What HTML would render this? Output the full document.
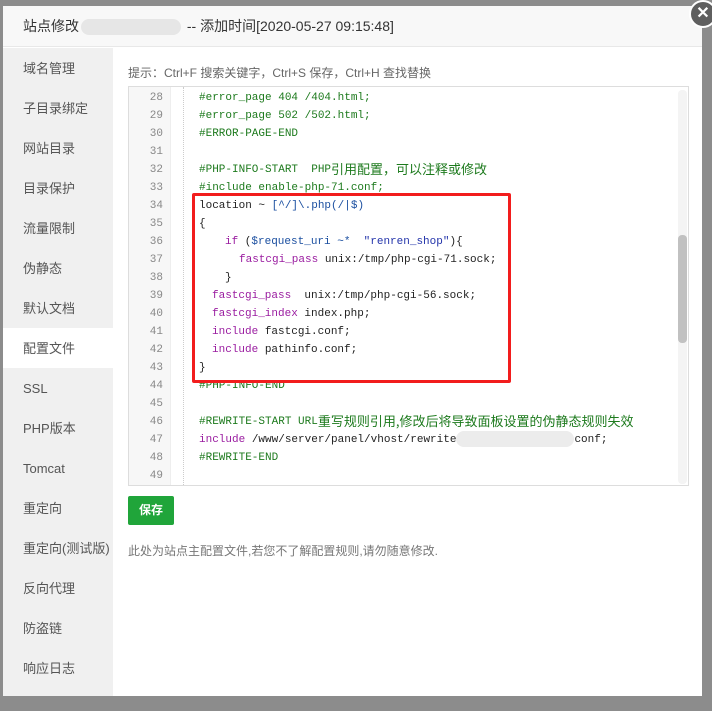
<!DOCTYPE html>
<html><head><meta charset="utf-8"><style>
*{margin:0;padding:0;box-sizing:border-box}
body{width:712px;height:711px;overflow:hidden;background:#8c8c8c;font-family:"Liberation Sans","Noto Sans CJK SC",sans-serif;position:relative}
.modal{position:absolute;left:3px;top:6px;width:699px;height:690px;background:#fff}
.hd{position:absolute;left:0;top:0;width:699px;height:41px;background:#f8f8f8;border-bottom:1px solid #e8e8e8;font-size:14px;color:#333;line-height:41px;padding-left:20px}
.blur{display:inline-block;width:100px;height:16px;background:#e6e6e6;border-radius:8px;vertical-align:middle;margin:0 2px}
.side{position:absolute;left:0;top:42px;width:110px;height:648px;background:#f0f0f0}
.side div{height:40px;line-height:42px;padding-left:20px;font-size:13px;color:#555}
.side .on{background:#fff}
.close{position:absolute;left:686px;top:-6px;width:28px;height:28px;border-radius:50%;background:#5f5f5f;border:2px solid #fff;color:#fff;font-size:16px;text-align:center;line-height:23px;font-weight:bold}
.tip{position:absolute;left:125px;top:58px;font-size:12px;color:#666}
.ed{position:absolute;left:125px;top:80px;width:561px;height:400px;border:1px solid #ddd;overflow:hidden;background:#fff}
.in{position:absolute;left:0;top:2px;width:561px;height:400px}
.gut{position:absolute;left:0;top:0;width:42px;height:400px;background:#f7f7f7;border-right:1px solid #eee}
.ln{position:absolute;left:0;width:34px;text-align:right;font:11px "Liberation Mono",monospace;color:#888;line-height:18px}
.cl{position:absolute;font:11px "Liberation Mono","Noto Sans CJK SC",monospace;line-height:18px;height:18px;white-space:pre;color:#222}
.cj{font-family:"Noto Sans CJK SC",sans-serif;font-size:13px;line-height:1;display:inline-block;vertical-align:top;margin-top:1px}
.c{color:#1d7a1d}.k{color:#9a1ca0}.b{color:#1b4fa0}.s{color:#2233aa}
.guide{position:absolute;left:54px;top:0;height:400px;border-left:1px dotted #ccc}
.sb{position:absolute;left:549px;top:3px;width:9px;height:394px;background:#f4f4f4;border-radius:4px}
.th{position:absolute;left:549px;top:148px;width:9px;height:108px;background:#c1c1c1;border-radius:4px}
.red{position:absolute;left:189px;top:187px;width:319px;height:190px;border:3px solid #f21d1d;border-radius:2px}
.btn{position:absolute;left:125px;top:490px;width:46px;height:29px;background:#20a53a;border-radius:2px;color:#fff;font-size:12px;font-weight:bold;text-align:center;line-height:29px}
.note{position:absolute;left:125px;top:536px;font-size:12px;color:#777}
</style></head><body>
<div class="modal">
<div class="hd">站点修改<span class="blur"></span> -- 添加时间[2020-05-27 09:15:48]</div>
<div class="side">
<div>域名管理</div><div>子目录绑定</div><div>网站目录</div><div>目录保护</div><div>流量限制</div><div>伪静态</div><div>默认文档</div><div class="on">配置文件</div><div>SSL</div><div>PHP版本</div><div>Tomcat</div><div>重定向</div><div>重定向(测试版)</div><div>反向代理</div><div>防盗链</div><div>响应日志</div>
</div>
<div class="close">✕</div>
<div class="tip">提示：Ctrl+F 搜索关键字，Ctrl+S 保存，Ctrl+H 查找替换</div>
<div class="ed">
<div class="gut"></div>
<div class="guide"></div>
<div class="in">
<div class="ln" style="top:0">28</div><div class="ln" style="top:18px">29</div><div class="ln" style="top:36px">30</div><div class="ln" style="top:54px">31</div><div class="ln" style="top:72px">32</div><div class="ln" style="top:90px">33</div><div class="ln" style="top:108px">34</div><div class="ln" style="top:126px">35</div><div class="ln" style="top:144px">36</div><div class="ln" style="top:162px">37</div><div class="ln" style="top:180px">38</div><div class="ln" style="top:198px">39</div><div class="ln" style="top:216px">40</div><div class="ln" style="top:234px">41</div><div class="ln" style="top:252px">42</div><div class="ln" style="top:270px">43</div><div class="ln" style="top:288px">44</div><div class="ln" style="top:306px">45</div><div class="ln" style="top:324px">46</div><div class="ln" style="top:342px">47</div><div class="ln" style="top:360px">48</div><div class="ln" style="top:378px">49</div>
<div class="cl c" style="left:70px;top:0">#error_page 404 /404.html;</div>
<div class="cl c" style="left:70px;top:18px">#error_page 502 /502.html;</div>
<div class="cl c" style="left:70px;top:36px">#ERROR-PAGE-END</div>
<div class="cl c" style="left:70px;top:72px">#PHP-INFO-START  PHP<span class="cj">引用配置，可以注释或修改</span></div>
<div class="cl c" style="left:70px;top:90px">#include enable-php-71.conf;</div>
<div class="cl" style="left:70px;top:108px">location ~ <span class="b">[^/]\.php(/|$)</span></div>
<div class="cl" style="left:70px;top:126px">{</div>
<div class="cl" style="left:96px;top:144px"><span class="k">if</span> (<span class="b">$request_uri</span> <span class="b">~*</span>  <span class="s">"renren_shop"</span>){</div>
<div class="cl" style="left:110px;top:162px"><span class="k">fastcgi_pass</span> unix:/tmp/php-cgi-71.sock;</div>
<div class="cl" style="left:96px;top:180px">}</div>
<div class="cl" style="left:83px;top:198px"><span class="k">fastcgi_pass</span>  unix:/tmp/php-cgi-56.sock;</div>
<div class="cl" style="left:83px;top:216px"><span class="k">fastcgi_index</span> index.php;</div>
<div class="cl" style="left:83px;top:234px"><span class="k">include</span> fastcgi.conf;</div>
<div class="cl" style="left:83px;top:252px"><span class="k">include</span> pathinfo.conf;</div>
<div class="cl" style="left:70px;top:270px">}</div>
<div class="cl c" style="left:70px;top:288px">#PHP-INFO-END</div>
<div class="cl c" style="left:70px;top:324px">#REWRITE-START URL<span class="cj">重写规则引用,修改后将导致面板设置的伪静态规则失效</span></div>
<div class="cl" style="left:70px;top:342px"><span class="k">include</span> /www/server/panel/vhost/rewrite<span style="display:inline-block;width:118px;height:16px;background:#ececec;border-radius:8px;vertical-align:middle"></span>conf;</div>
<div class="cl c" style="left:70px;top:360px">#REWRITE-END</div>
</div>
<div class="sb"></div><div class="th"></div>
</div>
<div class="red"></div>
<div class="btn">保存</div>
<div class="note">此处为站点主配置文件,若您不了解配置规则,请勿随意修改.</div>
</div>
</body></html>
